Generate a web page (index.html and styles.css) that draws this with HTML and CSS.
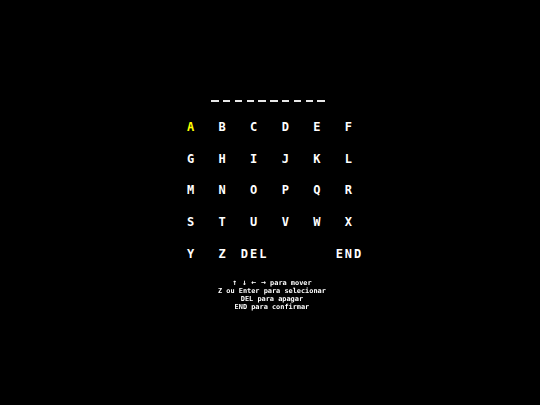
FILE: index.html
```html
<!DOCTYPE html>
<html>
<head>
<meta charset="utf-8">
<link rel="stylesheet" href="styles.css">
</head>
<body>
<main class="screen">
  <div class="name-slots">
    <span class="slot"></span><span class="slot"></span><span class="slot"></span><span class="slot"></span><span class="slot"></span>
    <span class="slot"></span><span class="slot"></span><span class="slot"></span><span class="slot"></span><span class="slot"></span>
  </div>
  <div class="keys">
    <span class="key selected">A</span><span class="key">B</span><span class="key">C</span><span class="key">D</span><span class="key">E</span><span class="key">F</span>
    <span class="key">G</span><span class="key">H</span><span class="key">I</span><span class="key">J</span><span class="key">K</span><span class="key">L</span>
    <span class="key">M</span><span class="key">N</span><span class="key">O</span><span class="key">P</span><span class="key">Q</span><span class="key">R</span>
    <span class="key">S</span><span class="key">T</span><span class="key">U</span><span class="key">V</span><span class="key">W</span><span class="key">X</span>
    <span class="key">Y</span><span class="key">Z</span><span class="key">DEL</span><span class="key"></span><span class="key"></span><span class="key">END</span>
  </div>
  <div class="help">
    <p><span class="arrows">↑ ↓ ← →</span> para mover</p>
    <p>Z ou Enter para selecionar</p>
    <p>DEL para apagar</p>
    <p>END para confirmar</p>
  </div>
</main>
</body>
</html>
```

FILE: styles.css
```css
html, body {
  margin: 0;
  padding: 0;
  background: #000;
}
body {
  width: 540px;
  height: 405px;
  overflow: hidden;
  font-family: "DejaVu Sans Mono", "Liberation Mono", monospace;
  font-weight: bold;
  color: #fff;
  -webkit-font-smoothing: antialiased;
}
.screen {
  display: flex;
  flex-direction: column;
  align-items: center;
  padding-top: 100px;
}
.name-slots {
  display: flex;
  gap: 4.3px;
  margin-left: -4px;
  height: 2px;
  margin-bottom: 9.2px;
}
.slot {
  width: 7.5px;
  height: 2px;
  background: #e8e8e8;
}
.keys {
  display: grid;
  grid-template-columns: repeat(6, 31.6px);
  grid-auto-rows: 31.7px;
  margin-left: -1px;
}
.key {
  display: flex;
  align-items: center;
  justify-content: center;
  font-size: 12px;
  letter-spacing: 2px;
  padding-left: 2px;
  white-space: nowrap;
  line-height: 1;
}
.key.selected {
  color: #ffff00;
}
.help {
  margin-top: 9px;
  margin-left: 3px;
  text-align: center;
  font-size: 6.9px;
  line-height: 8px;
  will-change: transform;
  background: #000;
}
.help p {
  margin: 0;
}
.arrows {
  font-size: 8px;
  line-height: 8px;
}
```
